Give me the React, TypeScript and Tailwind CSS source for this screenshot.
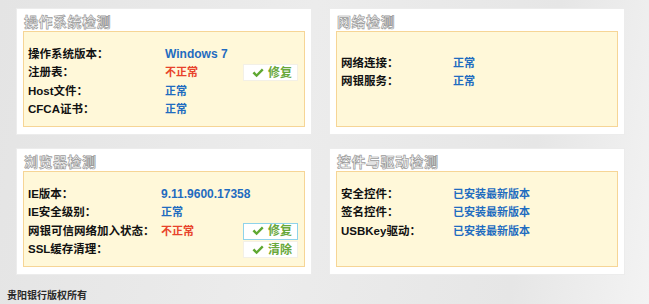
import React from "react";

const font = { fontFamily: '"Liberation Sans", "Noto Sans CJK SC", sans-serif' };

function CheckIcon() {
  return (
    <svg width="12" height="10" viewBox="0 0 12 10" className="shrink-0">
      <path d="M0.5 5.3 L2.4 3.6 L4.6 5.9 L9.9 0.6 L11.6 2.3 L4.6 9.2 Z" fill="#5fa832" />
    </svg>
  );
}

function FixButton({ text, focused }: { text: string; focused?: boolean }) {
  return (
    <div
      className={
        "flex items-center gap-[4px] h-[17px] w-[55px] pl-[8px] bg-white border " +
        (focused ? "border-[#8fd3ea]" : "border-[#f3f0e6]")
      }
    >
      <CheckIcon />
      <span className="text-[12px] font-bold text-[#68a83a] leading-none">{text}</span>
    </div>
  );
}

type Row = { label: string; value?: string; color?: string; big?: boolean; btn?: string; focused?: boolean };

function Card({ title, rows, valueX, padTop }: { title: string; rows: Row[]; valueX: string; padTop: string }) {
  return (
    <div className="bg-white h-[127px] px-[6px] pt-[4px] pb-[7px] flex flex-col border border-[#ececec]">
      <div className="h-[18px] pl-[1px] text-[14px] font-bold leading-[18px] text-[#f7f7f7] [-webkit-text-stroke:0.7px_#9b9b9b] tracking-[0.5px]">
        {title}
      </div>
      <div className={"flex-1 bg-[#fff8d9] border border-[#f6d596] pl-[4px] pr-[6px] " + padTop}>
        {rows.map((r, i) => (
          <div key={i} className="flex items-center h-[18.5px]">
            <div className={valueX + " shrink-0 text-[11.5px] font-bold text-[#111] leading-none"}>{r.label}</div>
            <div
              className={
                (r.big ? "text-[12px] " : "text-[11px] ") +
                "font-bold leading-none " +
                (r.color === "red" ? "text-[#e8432b]" : "text-[#1f6cc0]")
              }
            >
              {r.value}
            </div>
            {r.btn && (
              <div className="ml-auto">
                <FixButton text={r.btn} focused={r.focused} />
              </div>
            )}
          </div>
        ))}
      </div>
    </div>
  );
}

export default function App() {
  return (
    <div
      style={font}
      className="w-[649px] h-[304px] overflow-hidden bg-[linear-gradient(100deg,#e4e4e4_0%,#ececec_45%,#e6e6e6_80%,#f3f3f3_100%)] flex flex-col"
    >
      <div className="grid grid-cols-[296px_296px] gap-x-[17px] gap-y-[13px] ml-[16px] mt-[8px]">
        <Card
          title="操作系统检测"
          valueX="w-[137px]"
          padTop="pt-[13px]"
          rows={[
            { label: "操作系统版本：", value: "Windows 7", big: true },
            { label: "注册表：", value: "不正常", color: "red", btn: "修复" },
            { label: "Host文件：", value: "正常" },
            { label: "CFCA证书：", value: "正常" },
          ]}
        />
        <Card
          title="网络检测"
          valueX="w-[112px]"
          padTop="pt-[22px]"
          rows={[
            { label: "网络连接：", value: "正常" },
            { label: "网银服务：", value: "正常" },
          ]}
        />
        <Card
          title="浏览器检测"
          valueX="w-[133px]"
          padTop="pt-[13px]"
          rows={[
            { label: "IE版本：", value: "9.11.9600.17358", big: true },
            { label: "IE安全级别：", value: "正常" },
            { label: "网银可信网络加入状态：", value: "不正常", color: "red", btn: "修复", focused: true },
            { label: "SSL缓存清理：", value: "", btn: "清除" },
          ]}
        />
        <Card
          title="控件与驱动检测"
          valueX="w-[112px]"
          padTop="pt-[13px]"
          rows={[
            { label: "安全控件：", value: "已安装最新版本" },
            { label: "签名控件：", value: "已安装最新版本" },
            { label: "USBKey驱动：", value: "已安装最新版本" },
          ]}
        />
      </div>
      <div className="mt-[16px] ml-[7px] text-[10px] font-bold text-[#2a2a2a] leading-none">贵阳银行版权所有</div>
    </div>
  );
}
